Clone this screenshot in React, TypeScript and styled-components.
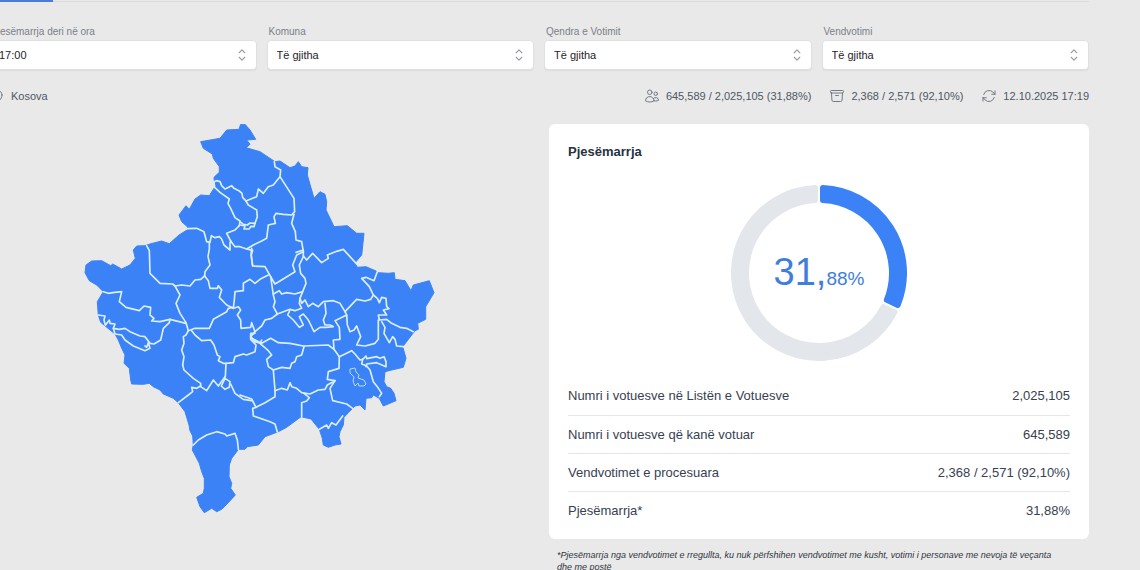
import React from 'react';
import styled, { createGlobalStyle } from 'styled-components';
import {
  HiOutlineArchiveBox,
  HiOutlineArrowPath,
  HiOutlineChevronUpDown,
  HiOutlineMapPin,
  HiOutlineUsers,
} from 'react-icons/hi2';

const GlobalStyle = createGlobalStyle`
  *, *::before, *::after { box-sizing: border-box; }
  body {
    margin: 0;
    background: #e9e9e9;
    color: #374151;
    font-family: "Liberation Sans", Arial, sans-serif;
    font-size: 13px;
  }
`;

const Page = styled.main`
  margin-left: -11px;
  padding-right: 51px;
`;

const TabBar = styled.nav`
  display: flex;
  height: 2px;
  background: linear-gradient(#e9e9e9 50%, #d9dadd 50%);
`;

const ActiveTab = styled.div`
  width: 64px;
  background: #4a7bd8;
`;

const Filters = styled.div`
  display: grid;
  grid-template-columns: repeat(4, 1fr);
  gap: 10px;
  padding-top: 22px;
`;

const Field = styled.div`
  display: flex;
  flex-direction: column;
`;

const FieldLabel = styled.label`
  padding-left: 2px;
  font-size: 10px;
  line-height: 16px;
  color: #7b8088;
`;

const SelectBox = styled.div`
  position: relative;
`;

const Select = styled.select`
  display: block;
  width: 100%;
  height: 30px;
  padding: 0 9px;
  appearance: none;
  border: 1px solid #dfe0e2;
  border-radius: 4px;
  background: #fff;
  box-shadow: 0 1px 1px rgba(0, 0, 0, 0.06);
  color: #1f2328;
  font-family: inherit;
  font-size: 11px;
`;

const SelectArrows = styled(HiOutlineChevronUpDown)`
  position: absolute;
  right: 6px;
  top: 6px;
  width: 18px;
  height: 18px;
  color: #9a9da3;
  pointer-events: none;
`;

const InfoBar = styled.div`
  display: flex;
  justify-content: space-between;
  padding: 18px 0 20px;
`;

const InfoGroup = styled.div`
  display: flex;
  gap: 18px;
`;

const Info = styled.div`
  display: flex;
  align-items: center;
  gap: 6px;
  font-size: 11px;
  line-height: 16px;
  color: #4f5763;

  svg {
    width: 16px;
    height: 16px;
    color: #747a84;
  }
`;

const Content = styled.div`
  display: grid;
  grid-template-columns: 1fr 1fr;
  gap: 20px;
`;

const MapPanel = styled.section`
  display: flex;
  justify-content: center;
  align-items: flex-start;
`;

const Card = styled.section`
  padding: 19px;
  padding-bottom: 10px;
  border-radius: 6px;
  background: #fff;
`;

const CardTitle = styled.h2`
  margin: 0;
  font-size: 13px;
  line-height: 18px;
  color: #273142;
`;

const Chart = styled.div`
  display: grid;
  place-items: center;
  padding: 24px 0 16px;

  > * {
    grid-area: 1 / 1;
  }
`;

const ChartValue = styled.div`
  padding-top: 5px;
  font-size: 38px;
  line-height: 44px;
  color: #3f7edb;

  small {
    font-size: 19px;
  }
`;

const Stats = styled.table`
  width: 100%;
  border-collapse: collapse;
`;

const StatRow = styled.tr`
  & + & {
    border-top: 1px solid #e4e6ea;
  }
`;

const StatName = styled.th`
  height: 38px;
  padding: 0;
  font-weight: 400;
  text-align: left;
`;

const StatValue = styled.td`
  padding: 0;
  text-align: right;
`;

const Footnote = styled.p`
  margin: 0;
  padding: 10px 24px 0 8px;
  font-size: 9px;
  font-style: italic;
  line-height: 12px;
  color: #30353d;
`;

const OUTLINE =
  '200.7,141.7 203.3,148.3 212.3,154 213.3,158.3 219.3,166.7 219.3,172.3 214,177.3 214.7,187.3 209.3,195.7 200.7,195 195,199 189.3,209.3 186,205.7 179,215 181.7,221.7 187.3,226.7 188.3,229.3 179,235 169.3,243.7 161.7,241 151,243.7 145,245.7 136.7,246 133.3,250 135.3,258.3 130,265 121.7,269 112.7,264 110.7,265.7 101.7,260.7 91.7,261 86,265 85,272.7 89.3,280.7 96.7,285 103.3,291.7 97.3,301.7 98.3,315 100.7,322.3 106.7,327.3 115,334 118.3,340 121.7,348.3 125,355 124,363.3 129.3,368.3 130.7,380 131.7,384 143.3,384.3 149.3,383.3 153.3,386.7 160,390 163.3,394 173.3,398.3 178.3,402.7 185,411.7 189,425 190,430.7 192.7,436 193.3,445 192.3,450 199.3,463.3 201.7,471.7 204.3,478.3 204.3,488.3 203.3,493.3 196.7,497.3 200,506.7 204.3,512.7 211.7,508.3 216.7,511.7 221.7,509.3 228.3,502.7 235.3,495 230.7,488.3 231.7,483.3 229,476.7 229.3,465 231.7,458.3 236.7,451.7 238.3,449.3 245,449.3 247.3,446.7 258.3,445 265,436.7 278.3,431.7 286.7,427.3 301,416.7 311,419 319.3,429.3 322.3,438.3 323.3,445 328.3,447.3 335,445 341,444 339,436.7 340,431.7 343.3,425 344,417.3 348.3,412.7 355,406 360,405 365,410 366,398.3 371.7,397.7 373.3,395 379.3,398.3 383.3,406 396,400.7 394,393.3 390.7,388.3 386.7,386.7 384,381.7 385,371.7 391.7,370 403.3,367.3 406,358.3 402.7,346.7 415,330.7 418.3,329.3 417.7,323.3 425.7,319.3 425.7,306.7 434,292.7 429.3,280.7 413.3,285 411,290.7 405,280.7 395,279.3 394.3,272.7 388.3,273.3 378.3,272.7 376,271 366,266.7 357.3,267.3 355,262.7 361.7,255 364,233.3 356.7,233.3 347.3,225.7 334,226.7 331.7,221.7 326,210 326.7,201.7 325,194.3 320,191.7 314,198.3 307.3,175 308,167.7 301.7,166.7 298.3,161.7 295,166 290,167.7 280,161 275,161.7 260,151.7 246,147.7 250,144.3 246.7,140 255.7,139.3 250,130 245,124.3 240.7,124.3 239,129.3 226.7,130 220,138.3';

type Sector = { x: number; y: number; lines: string[] };

/* Municipality borders, grouped by map sector; each sector is drawn at a third of its own units. */
const SECTORS: Sector[] = [
  {
    x: 80,
    y: 115,
    lines: [
      '402,200 410,197 420,200 425,212 435,222 455,212 462,220 478,228 486,235 488,247 497,257',
      '402,200 404,217 420,232 448,252 444,265 452,280 465,308 480,318 478,332',
      '497,257 505,270 530,285 532,305 525,325 510,324 502,330 490,328 480,320',
      '482,330 495,333 492,342 508,342 512,334 522,335 525,325',
      '322,341 350,340 372,350 380,380 390,382 394,362 405,368 418,365 425,372 432,390 450,405 450,385 452,378 440,355 465,345 478,332',
      '388,380 388,402 384,425 390,450 375,470 374,483',
      '200,392 208,407 210,475 240,505 278,507 285,513 305,510 330,513 345,495 362,493 374,483',
    ],
  },
  {
    x: 220,
    y: 115,
    lines: [
      '78,258 110,245 115,222 130,235 145,215 160,210 172,195 180,185 182,165 165,155 163,140',
      '180,185 222,250 224,290 215,300 190,298 168,295 162,305 166,325 145,330 140,370 125,378 100,390 80,402 60,395 45,395 32,378',
      '222,298 215,325 226,350 228,375 245,380 250,410',
      '228,412 250,405',
      '80,402 98,406 94,420 98,453',
    ],
  },
  {
    x: 80,
    y: 240,
    lines: [
      '374,108 385,122 390,145 412,145 415,137 425,150 418,172 440,195 460,205',
      '460,205 463,180 465,155 490,152 490,130 510,118 525,130 540,118 565,105',
      '285,138 300,165 288,190 300,220 318,248 325,272 318,285 310,290 312,310 305,330 312,350 308,375',
      '70,155 85,160 98,158 125,155 118,185 138,202 178,212 192,198 212,202 210,225 222,235 215,243 240,245 270,238 318,250',
      '270,238 268,248 250,265 242,300 222,312 210,310 195,290 180,288 150,275 135,265 118,268 100,265 105,252 90,250 88,240 76,256 72,240 75,228 55,225',
      '100,265 105,282 125,285 135,300 160,318 195,332 210,325 205,308 200,322 195,318',
      '325,272 345,265 388,265 400,238 440,215 445,205 458,202',
      '335,272 345,285 365,302 392,300 402,315 412,345 420,350 415,362 430,370 438,370 436,410',
      '438,370 460,368 465,350 490,342 500,345 525,335 528,315 512,298 512,280 525,280',
      '460,205 475,200 482,210 472,225 482,240 483,265 512,262 515,248 525,275',
    ],
  },
  {
    x: 240,
    y: 240,
    lines: [
      '35,25 33,45 38,78 75,80 92,110 105,132 165,95 158,75 170,45 190,35',
      '92,110 100,165 105,185 100,200 112,222 95,235 75,240 65,258 45,275 32,290 45,305',
      '190,35 190,50 178,75 182,100 195,115 198,130 188,155 165,162 140,158 125,162 118,152 100,162',
      '190,48 200,60 218,40 245,68 265,55 262,45 290,34 310,28 330,50 350,72',
      '188,155 180,175 185,190 195,180 205,200 218,190 235,200 250,185 280,182 300,190 315,215 320,225 300,235 285,242 298,262 300,298 280,300 282,328',
      '180,175 178,190 185,205 165,212 150,208 130,215 112,222',
      '150,210 143,225 160,240 178,262 190,255 178,230 190,222 205,240 222,275 240,262 258,262 280,260 270,255 255,255 250,240 258,220 255,190',
      '315,215 350,178 375,183 392,178 400,165 388,140 365,115 378,112 402,122 412,95',
      '400,165 412,175 418,188 425,172 438,175 440,200 447,206 430,210 440,225 415,225 418,240 440,238 455,250 480,262 500,265 520,275',
      '320,225 322,255 330,275 342,270 350,258 362,290 350,315 375,318 405,310 415,298 415,240',
      '425,245 435,262 432,280 448,308 458,290 465,298 470,318 490,320',
      '35,295 65,310 92,295 115,308 150,310 190,318 265,315 282,328 298,350',
    ],
  },
  {
    x: 240,
    y: 330,
    lines: [
      '60,40 85,62 95,75 80,88 85,110 100,120 105,180 105,200 75,218 48,232',
      '100,120 125,112 150,115 155,100 165,95 170,80 185,75 192,50',
      '298,80 297,115 265,125 262,148 285,152 262,165 255,178 235,180 210,192 185,188 170,175 155,170 150,158 142,180 125,175 105,182',
      '192,190 208,203 200,213 185,218 185,260',
      '298,80 335,62 345,72 360,90 368,88 365,102 380,108 390,120 400,155 412,170 425,190 418,200',
      '368,88 378,78 380,86 410,80 420,85 432,80 438,95 438,110 410,98 380,102 378,110',
      '285,152 270,175 278,212 320,222 338,235',
      '238,298 260,285 265,295 275,278 288,285 308,258',
      '0,195 35,207 48,232 38,235 40,258 90,275 105,282 112,306',
      '45,35 60,40 65,30',
    ],
  },
  {
    x: 110,
    y: 330,
    lines: [
      '205,218 235,195 248,185 245,172 260,175 272,168',
      '218,105 222,120 250,145 272,160 272,170 290,182 310,150 325,168 345,140',
      '334,168 345,145 360,155 358,172 345,178 334,168',
      '362,162 375,190 400,208 425,212',
      '250,345 265,330 290,315 320,305 345,312 350,318 375,310 382,330 385,358',
    ],
  },
];

const KosovoMap = () => (
  <svg width="360" height="392" viewBox="79 124 360 392" role="img" aria-label="Kosova">
    <polygon points={OUTLINE} fill="#3b82f6" stroke="#3b82f6" strokeWidth="1" strokeLinejoin="round" />
    {SECTORS.map((s) => (
      <g
        key={`${s.x}-${s.y}`}
        transform={`translate(${s.x} ${s.y}) scale(${1 / 3})`}
        fill="none"
        stroke="#d9effb"
        strokeWidth="5"
        strokeLinejoin="round"
        strokeLinecap="round"
      >
        {s.lines.map((l) => (
          <polyline key={l} points={l} />
        ))}
      </g>
    ))}
    <polygon
      points="350,369 355,368 356,372 359,375 358,378 364,380 366,384 364,386 359,386 358,383 355,386 353,381 354,377 350,373"
      fill="none"
      stroke="#b8dcfa"
      strokeWidth="1"
      strokeLinejoin="round"
    />
  </svg>
);

const OUTER = 85;
const INNER = 73;
const EDGE = 4;

/* Ring segment between two angles (degrees from 12 o'clock), inset so that its stroke rounds the corners. */
const segment = (from: number, to: number) => {
  const point = (r: number, deg: number, shift: number) => {
    const a = (deg * Math.PI) / 180 + Math.asin(shift / r);
    return `${(88 + r * Math.sin(a)).toFixed(2)} ${(88 - r * Math.cos(a)).toFixed(2)}`;
  };
  const large = to - from > 180 ? 1 : 0;
  return [
    `M${point(OUTER, from, EDGE)}`,
    `A${OUTER} ${OUTER} 0 ${large} 1 ${point(OUTER, to, -EDGE)}`,
    `L${point(INNER, to, -EDGE)}`,
    `A${INNER} ${INNER} 0 ${large} 0 ${point(INNER, from, EDGE)}`,
    'Z',
  ].join(' ');
};

const TURNOUT_ANGLE = 360 * 0.3188;

const Donut = () => (
  <svg width="176" height="176" viewBox="0 0 176 176" strokeWidth="6" strokeLinejoin="round" aria-hidden="true">
    <path d={segment(TURNOUT_ANGLE, 360)} fill="#e3e7eb" stroke="#e3e7eb" />
    <path d={segment(0, TURNOUT_ANGLE)} fill="#3b82f6" stroke="#3b82f6" />
  </svg>
);

const FILTERS = [
  { id: 'ora', label: 'Pjesëmarrja deri në ora', value: '17:00' },
  { id: 'komuna', label: 'Komuna', value: 'Të gjitha' },
  { id: 'qendra', label: 'Qendra e Votimit', value: 'Të gjitha' },
  { id: 'vendvotimi', label: 'Vendvotimi', value: 'Të gjitha' },
];

const STATS = [
  ['Numri i votuesve në Listën e Votuesve', '2,025,105'],
  ['Numri i votuesve që kanë votuar', '645,589'],
  ['Vendvotimet e procesuara', '2,368 / 2,571 (92,10%)'],
  ['Pjesëmarrja*', '31,88%'],
];

export default function App() {
  return (
    <>
      <GlobalStyle />
      <Page>
        <TabBar>
          <ActiveTab />
        </TabBar>
        <Filters>
          {FILTERS.map((f) => (
            <Field key={f.id}>
              <FieldLabel htmlFor={f.id}>{f.label}</FieldLabel>
              <SelectBox>
                <Select id={f.id} defaultValue={f.value}>
                  <option>{f.value}</option>
                </Select>
                <SelectArrows />
              </SelectBox>
            </Field>
          ))}
        </Filters>
        <InfoBar>
          <Info>
            <HiOutlineMapPin />
            Kosova
          </Info>
          <InfoGroup>
            <Info>
              <HiOutlineUsers />
              645,589 / 2,025,105 (31,88%)
            </Info>
            <Info>
              <HiOutlineArchiveBox />
              2,368 / 2,571 (92,10%)
            </Info>
            <Info>
              <HiOutlineArrowPath />
              12.10.2025 17:19
            </Info>
          </InfoGroup>
        </InfoBar>
        <Content>
          <MapPanel>
            <KosovoMap />
          </MapPanel>
          <div>
            <Card>
              <CardTitle>Pjesëmarrja</CardTitle>
              <Chart>
                <Donut />
                <ChartValue>
                  31,<small>88%</small>
                </ChartValue>
              </Chart>
              <Stats>
                <tbody>
                  {STATS.map(([name, value]) => (
                    <StatRow key={name}>
                      <StatName scope="row">{name}</StatName>
                      <StatValue>{value}</StatValue>
                    </StatRow>
                  ))}
                </tbody>
              </Stats>
            </Card>
            <Footnote>
              *Pjesëmarrja nga vendvotimet e rregullta, ku nuk përfshihen vendvotimet me kusht, votimi i personave me
              nevoja të veçanta dhe me postë
            </Footnote>
          </div>
        </Content>
      </Page>
    </>
  );
}
